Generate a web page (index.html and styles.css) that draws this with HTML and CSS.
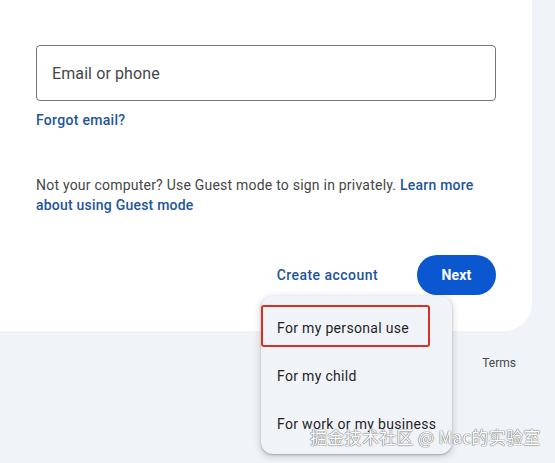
FILE: index.html
```html
<!DOCTYPE html>
<html>
<head>
<meta charset="utf-8">
<link rel="stylesheet" href="styles.css">
</head>
<body>
<div class="page">
  <main class="card">
    <div class="field">
      <span class="placeholder">Email or phone</span>
    </div>
    <a class="link forgot">Forgot email?</a>
    <p class="guest">Not your computer? Use Guest mode to sign in privately. <a class="link">Learn more about using Guest mode</a></p>
    <div class="actions">
      <a class="link create">Create account</a>
      <button class="next">Next</button>
    </div>
  </main>
  <footer class="footer">
    <span class="terms">Terms</span>
  </footer>
  <div class="menu">
    <div class="item">For my personal use</div>
    <div class="item">For my child</div>
    <div class="item">For work or my business</div>
    <div class="mark"></div>
  </div>
  <div class="watermark">掘金技术社区 @ Mac的实验室</div>
</div>
</body>
</html>
```
FILE: styles.css
```css
html, body {
  margin: 0;
  padding: 0;
}
body {
  background: #f0f4f9;
  font-family: Roboto, "Noto Sans", Arial, sans-serif;
  color: #444746;
  width: 555px;
  height: 463px;
  overflow: hidden;
}
.page {
  position: relative;
  width: 555px;
  height: 463px;
}
.card {
  width: 532px;
  box-sizing: border-box;
  background: #fff;
  padding: 45px 36px 36px 36px;
  border-bottom-right-radius: 28px;
}
.field {
  height: 56px;
  box-sizing: border-box;
  border: 1px solid #747775;
  border-radius: 4px;
  display: flex;
  align-items: center;
  padding-left: 15px;
}
.placeholder {
  font-size: 16px;
  color: #444746;
  margin-top: 1px;
  letter-spacing: 0.1px;
}
.link {
  color: #22549e;
  font-weight: 500;
  text-decoration: none;
}
.forgot {
  display: block;
  font-size: 14px;
  line-height: 20px;
  margin-top: 9px;
  letter-spacing: 0.3px;
}
.guest {
  margin: 45px 0 0 0;
  font-size: 14px;
  line-height: 20px;
  color: #444746;
  letter-spacing: 0.22px;
}
.actions {
  margin-top: 40px;
  display: flex;
  justify-content: flex-end;
  align-items: center;
}
.create {
  font-size: 14px;
  margin-right: 39px;
  letter-spacing: 0.45px;
}
.next {
  width: 79px;
  height: 40px;
  border: none;
  border-radius: 20px;
  background: #0b57d0;
  color: #fff;
  font-family: Roboto, "Noto Sans", Arial, sans-serif;
  font-size: 14px;
  font-weight: 700;
  padding: 0;
  letter-spacing: 0.2px;
}
.footer {
  display: flex;
  justify-content: flex-end;
  padding: 24px 39px 0 0;
}
.terms {
  font-size: 12px;
  line-height: 16px;
  color: #444746;
}
.menu {
  position: absolute;
  left: 261px;
  top: 296px;
  width: 191px;
  height: 158px;
  box-sizing: border-box;
  padding-top: 8px;
  background: #f0f4f9;
  border-radius: 12px;
  box-shadow: 0 2px 6px 2px rgba(0, 0, 0, 0.12), 0 1px 2px rgba(0, 0, 0, 0.25);
}
.item {
  height: 48px;
  display: flex;
  align-items: center;
  padding-left: 16px;
  font-size: 14px;
  color: #1f1f1f;
  white-space: nowrap;
  letter-spacing: 0.32px;
}
.mark {
  position: absolute;
  left: 0;
  top: 9px;
  width: 169px;
  height: 42px;
  box-sizing: border-box;
  border: 2px solid #d93025;
  border-radius: 3px;
}
.watermark {
  position: absolute;
  left: 310px;
  top: 426px;
  font-family: "Noto Sans CJK SC", "Noto Sans", sans-serif;
  font-size: 17px;
  line-height: 22px;
  letter-spacing: 0.3px;
  color: #fff;
  white-space: nowrap;
  text-shadow: 0 0 1px #777, 0 0 1px #777, 0 0 1px #777;
}
```
